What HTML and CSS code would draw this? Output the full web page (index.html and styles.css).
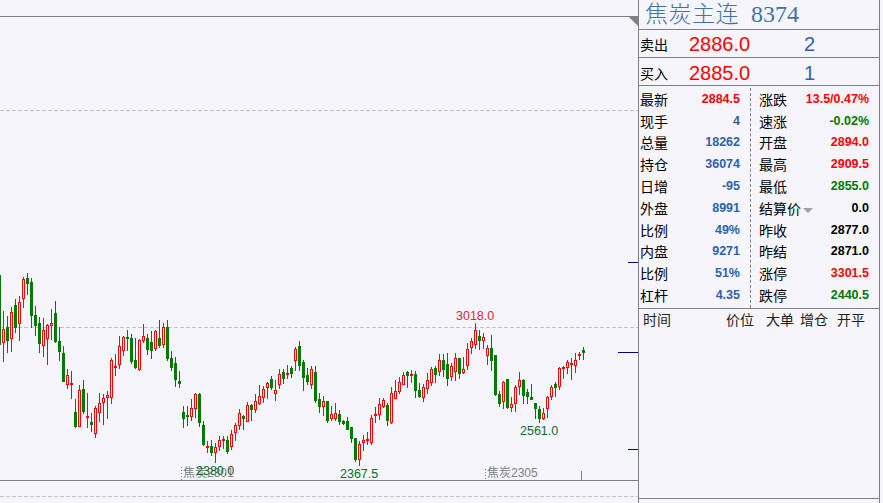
FILE: index.html
```html
<!DOCTYPE html>
<html lang="zh-CN">
<head>
  <meta charset="UTF-8" />
  <title>焦炭主连 8374</title>
  <link rel="stylesheet" href="styles.css">
</head>
<body>
  <div class="terminal">
    <div class="chart">
      <svg id="kline" class="kline" width="638" height="503" viewBox="0 0 638 503">
        <line class="axis" x1="0" y1="16.5" x2="638" y2="16.5" />
        <polygon class="corner" points="628,16 638,16 638,26" />
        <line class="grid" x1="0" y1="110.5" x2="638" y2="110.5" />
        <line class="grid" x1="0" y1="327.5" x2="638" y2="327.5" />
        <line class="grid" x1="0" y1="496.5" x2="638" y2="496.5" />
        <line class="axis" x1="0" y1="480.5" x2="638" y2="480.5" />
        <line class="tick" x1="628" y1="262.5" x2="638" y2="262.5" />
        <line class="tick" x1="618" y1="352.5" x2="638" y2="352.5" />
        <line class="tick" x1="628" y1="449.5" x2="638" y2="449.5" />
        <line class="month-tick" x1="581.5" y1="471" x2="581.5" y2="480" />
        <line class="month-dots" x1="181.5" y1="467" x2="181.5" y2="480" />
        <line class="month-dots" x1="485.5" y1="469" x2="485.5" y2="480" />
        <g id="candles"></g>
        <text class="month" x="183" y="477">焦炭2301</text>
        <text class="month" x="487" y="477">焦炭2305</text>
        <text class="peak up" x="456" y="320">3018.0</text>
        <text class="peak down" x="520" y="435">2561.0</text>
        <text class="peak down" x="340" y="478">2367.5</text>
        <text class="peak down" x="196" y="475">2380.0</text>
      </svg>
    </div>

    <div class="quote">
      <div class="title"><span class="name">焦炭主连</span><span class="code">8374</span></div>

      <div class="book">
        <div class="book-row">
          <span class="label">卖出</span>
          <span class="book-price">2886.0</span>
          <span class="book-size">2</span>
        </div>
        <div class="book-row">
          <span class="label">买入</span>
          <span class="book-price">2885.0</span>
          <span class="book-size">1</span>
        </div>
      </div>

      <div class="stats">
        <div class="stat-col">
          <div class="stat"><span class="label">最新</span><b class="up">2884.5</b></div>
          <div class="stat"><span class="label">现手</span><b class="blue">4</b></div>
          <div class="stat"><span class="label">总量</span><b class="blue">18262</b></div>
          <div class="stat"><span class="label">持仓</span><b class="blue">36074</b></div>
          <div class="stat"><span class="label">日增</span><b class="blue">-95</b></div>
          <div class="stat"><span class="label">外盘</span><b class="blue">8991</b></div>
          <div class="stat"><span class="label">比例</span><b class="blue">49%</b></div>
          <div class="stat"><span class="label">内盘</span><b class="blue">9271</b></div>
          <div class="stat"><span class="label">比例</span><b class="blue">51%</b></div>
          <div class="stat"><span class="label">杠杆</span><b class="blue">4.35</b></div>
        </div>
        <div class="stat-col right">
          <div class="stat"><span class="label">涨跌</span><b class="up">13.5/0.47%</b></div>
          <div class="stat"><span class="label">速涨</span><b class="down">-0.02%</b></div>
          <div class="stat"><span class="label">开盘</span><b class="up">2894.0</b></div>
          <div class="stat"><span class="label">最高</span><b class="up">2909.5</b></div>
          <div class="stat"><span class="label">最低</span><b class="down">2855.0</b></div>
          <div class="stat"><span class="label">结算价<i class="caret"></i></span><b>0.0</b></div>
          <div class="stat"><span class="label">昨收</span><b>2877.0</b></div>
          <div class="stat"><span class="label">昨结</span><b>2871.0</b></div>
          <div class="stat"><span class="label">涨停</span><b class="up">3301.5</b></div>
          <div class="stat"><span class="label">跌停</span><b class="down">2440.5</b></div>
        </div>
      </div>

      <div class="ticks-head">
        <span class="col-time">时间</span>
        <span class="col-price">价位</span>
        <span class="col-big">大单</span>
        <span class="col-oi">增仓</span>
        <span class="col-type">开平</span>
      </div>
      <div class="ticks-body"></div>
    </div>
  </div>

  <script src="chart.js"></script>
</body>
</html>
```

FILE: styles.css
```css
:root {
  --bg: #f5f5fb;
  --line: #808080;
  --up: #ff0000;
  --down: #007a00;
  --blue: #2f62ac;
  --title: #3f72a8;
}

html, body {
  margin: 0;
  height: 100%;
  overflow: hidden;
  background: var(--bg);
}

body {
  font-family: "Liberation Sans", "Noto Sans CJK SC", sans-serif;
  color: #000;
}

.terminal {
  display: flex;
  height: 503px;
}

/* chart */
.chart {
  width: 638px;
  flex: none;
}

.kline {
  display: block;
}

.axis {
  stroke: var(--line);
  stroke-width: 1;
}

.corner {
  fill: var(--line);
}

.grid {
  stroke: #c4c4c8;
  stroke-width: 1;
  stroke-dasharray: 4 2;
}

.tick {
  stroke: #000080;
  stroke-width: 1;
}

.month-tick {
  stroke: var(--line);
}

.month-dots {
  stroke: var(--line);
  stroke-dasharray: 1 2;
}

.month {
  font-size: 12px;
  fill: var(--line);
}

.peak {
  font-size: 12.5px;
}

.peak.up { fill: #e0262e; }
.peak.down { fill: #0d6b2e; }

.wick { stroke-width: 1; }
.wick.rise { stroke: var(--up); }
.wick.fall { stroke: var(--down); }

.body-rise {
  fill: var(--bg);
  stroke: var(--up);
  stroke-width: 1;
}

.body-fall {
  fill: var(--down);
}

/* quote panel */
.quote {
  width: 240px;
  flex: none;
  display: flex;
  flex-direction: column;
  padding-bottom: 4px;
  border-left: 1px solid var(--line);
  border-right: 1px solid var(--line);
}

.title {
  height: 29px;
  display: flex;
  align-items: center;
  gap: 12px;
  padding-left: 6px;
  color: var(--title);
  font-size: 23px;
  line-height: 27px;
}

.name {
  font-weight: 300;
  letter-spacing: 0.5px;
}

.code {
  font-family: "Liberation Serif", serif;
  font-size: 24px;
}

.book {
  border-top: 1px solid var(--line);
}

.book-row {
  height: 26px;
  padding-top: 1px;
  display: flex;
  align-items: center;
  padding-left: 1px;
  border-bottom: 1px solid var(--line);
}

.book-row + .book-row {
  height: 24px;
  padding-top: 3px;
}

.book-row .label {
  width: 49px;
}

.book-price {
  width: 115px;
  font-size: 20px;
  color: var(--up);
}

.book-size {
  font-size: 20px;
  color: var(--blue);
}

.label {
  font-size: 14px;
}

.stats {
  display: flex;
  height: 220px;
  padding-top: 2px;
  border-bottom: 1px solid var(--line);
}

.stat-col {
  width: 100px;
  padding: 0 10px 0 1px;
  border-right: 1px dashed var(--line);
}

.stat-col.right {
  width: 110px;
  padding: 0 0 0 8px;
  border-right: none;
}

.stat {
  height: 21.8px;
  display: flex;
  align-items: center;
  justify-content: space-between;
}

.stat b {
  font-size: 12.5px;
}

.up { color: var(--up); }
.down { color: var(--down); }
.blue { color: var(--blue); }

.caret {
  display: inline-block;
  margin-left: 2px;
  vertical-align: middle;
  border-top: 5px solid #a0a0a0;
  border-left: 5px solid transparent;
  border-right: 5px solid transparent;
}

.ticks-head {
  display: flex;
  height: 22px;
  line-height: 22px;
  font-size: 14px;
  padding-left: 4px;
  color: #222;
}

.ticks-body {
  flex: 1;
  border-bottom: 1px solid var(--line);
}

.col-time { width: 83px; }
.col-price { width: 40px; }
.col-big { width: 34px; }
.col-oi { width: 37px; }
```

FILE: chart.js
```js
// wick top, body top, body bottom, wick bottom, read off the 3x crops.
// r = rising (hollow red), g = falling (solid green)
const crops = [
  {
    y0: 265, startX: 3, rows: [
      'r138,193,233,290', 'g153,186,227,263', 'r126,142,223,261', 'g102,120,188,203', 'r93,112,178,228',
      'r36,43,101,128', 'g24,40,56,90', 'g40,52,152,188', 'g123,151,182,212', 'g155,174,236,264',
      'r160,196,242,275', 'r178,180,221,300', 'r132,175,182,225', 'g108,144,230,235', 'g186,228,260,287',
      'g243,264,350,350', 'r312,331,359,372', 'r318,354,359,402', 'g402,441,486,489', 'r361,376,485,487',
      'g345,372,441,447', 'r384,453,458,489', 'g445,471,479,501', 'r423,430,506,519', 'r384,415,443,472',
      'r388,400,413,480', 'r379,391,400,462', 'r279,286,398,417', 'r267,304,308,333', 'r214,244,299,312',
      'r212,216,257,273', 'g195,216,222,258', 'g208,219,290,297', 'g220,285,309,312', 'r223,226,315,318',
      'r177,214,227,233', 'g207,220,255,270', 'g197,231,258,282', 'r195,198,251,258', 'g165,219,243,250',
      'r175,186,239,249', 'g165,186,282,288', 'g258,279,309,318', 'g276,294,345,366', 'g318,348,357,369',
      'g422,441,462,489', 'g423,450,456,483', 'r402,430,455,468', 'r385,388,431,460', 'g384,387,474,486',
      'g468,480,540,543', 'r528,543,549,564', 'g525,543,564,573', 'r533,546,564,594'
    ]
  },
  {
    y0: 325, startX: 219, rows: [
      'r333,345,366,378', 'r333,342,348,372', 'g333,345,381,387', 'r315,327,366,375', 'r294,300,324,348',
      'r252,264,303,315', 'g270,273,282,315', 'r231,240,291,291', 'g237,240,255,288', 'r207,228,255,264',
      'r180,213,237,240', 'r183,192,219,234', 'r171,174,189,222', 'g153,162,189,195', 'r165,195,207,228',
      'r132,147,180,192', 'g132,141,162,177', 'r120,144,150,162', 'g123,129,147,159', 'r66,72,108,138',
      'g48,63,123,138', 'g105,111,159,198', 'g129,150,171,180', 'r123,132,180,192', 'g123,141,228,234',
      'g204,222,246,264', 'r213,228,246,273', 'g228,228,288,294', 'r243,267,282,288', 'r234,264,282,288',
      'g255,267,291,300', 'g285,288,297,300', 'g276,288,315,315', 'g306,306,342,354', 'g339,339,405,411',
      'r348,357,405,423', 'r330,345,354,378', 'r321,342,348,360', 'r270,279,354,360', 'r246,267,273,294',
      'r219,237,270,285', 'r219,225,246,249', 'g234,240,288,303', 'r186,204,294,297', 'r165,198,222,222',
      'r156,171,201,207', 'r141,150,180,180', 'g138,141,153,189', 'r135,147,153,174', 'g138,147,198,219',
      'g174,195,216,219'
    ]
  },
  {
    y0: 305, startX: 423, rows: [
      'r237,246,279,291', 'r204,225,252,267', 'r186,192,234,243', 'g183,189,210,234', 'r147,165,201,213',
      'g147,165,195,216', 'g144,177,222,243', 'r174,183,216,228', 'r144,159,201,228', 'g159,159,207,222',
      'r156,192,204,207', 'r114,132,183,195', 'r99,108,129,147', 'r54,75,120,132', 'g75,93,108,135',
      'r84,96,108,132', 'r120,129,153,180', 'g90,129,168,198', 'g150,150,270,273', 'g258,267,297,306',
      'r228,231,291,312', 'g222,222,309,312', 'r276,297,309,321', 'r240,246,297,321', 'r201,225,246,270',
      'g222,225,273,297', 'g252,261,276,297', 'g237,276,285,285', 'g294,294,312,342', 'g303,312,342,354',
      'r309,324,342,345', 'r273,276,312,339', 'r240,246,276,285', 'g231,237,249,276', 'r186,189,246,255',
      'r183,186,192,222', 'r165,171,189,207', 'r159,174,180,225', 'r144,165,183,204', 'r141,147,153,165',
      'g126,135,144,165'
    ]
  }
];

const NS = 'http://www.w3.org/2000/svg';
const group = document.getElementById('candles');

function addShape(tag, attrs) {
  const el = document.createElementNS(NS, tag);
  Object.keys(attrs).forEach(key => el.setAttribute(key, attrs[key]));
  group.appendChild(el);
}

function drawCandle(x, kind, wickTop, bodyTop, bodyBottom, wickBottom) {
  const rise = kind === 'r';
  addShape('line', {
    class: 'wick ' + (rise ? 'rise' : 'fall'),
    x1: x + 0.5, y1: wickTop, x2: x + 0.5, y2: wickBottom
  });
  if (rise) {
    addShape('rect', {
      class: 'body-rise',
      x: x - 0.5, y: bodyTop + 0.5, width: 2, height: Math.max(bodyBottom - bodyTop - 1, 1)
    });
  } else {
    addShape('rect', {
      class: 'body-fall',
      x: x - 1, y: bodyTop, width: 3, height: Math.max(bodyBottom - bodyTop, 2)
    });
  }
}

// the green candle cut off by the left edge
drawCandle(-1, 'g', 275, 275, 345, 345);

crops.forEach(crop => {
  crop.rows.forEach((row, i) => {
    const [wickTop, bodyTop, bodyBottom, wickBottom] = row.slice(1).split(',').map(v => {
      return Math.round(crop.y0 + Number(v) / 3);
    });
    drawCandle(crop.startX + i * 4, row[0], wickTop, bodyTop, bodyBottom, wickBottom);
  });
});
```
